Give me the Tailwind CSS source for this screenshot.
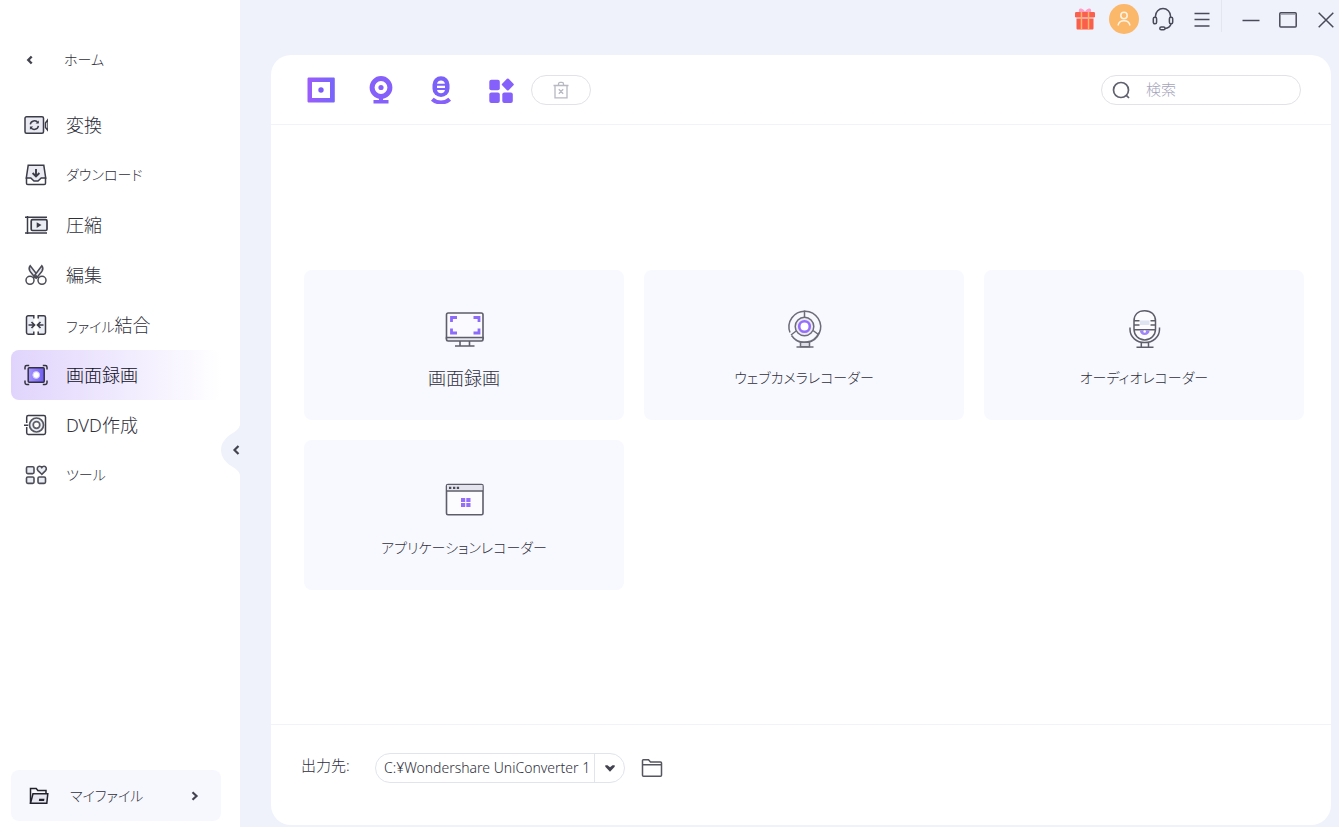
<!DOCTYPE html>
<html lang="ja">
<head>
<meta charset="utf-8">
<meta name="viewport" content="width=device-width, initial-scale=1">
<title>UniConverter</title>
<script src="https://cdn.jsdelivr.net/npm/@tailwindcss/browser@4"></script>
</head>
<body class="bg-[#eff2fb]">
<div class="flex min-h-screen font-['Noto_Sans','Noto_Sans_CJK_JP',sans-serif] text-[#2f303c] font-light">

  <aside class="relative flex w-60 shrink-0 flex-col bg-white pt-9 pr-[19px] pb-1.5 pl-[11px]">
    <button type="button" class="flex h-12 items-center pl-2.5 text-sm [font-feature-settings:'palt']">
      <svg class="mr-[27px] size-4" viewBox="0 0 16 16" fill="none" stroke="#42434e" stroke-width="2.4"><path d="M10.7 4.500 7.300 8l3.400 3.500"/></svg>
      ホーム
    </button>

    <nav class="mt-4 flex flex-col">
      <a href="#" class="flex h-[50px] items-center gap-[18px] rounded-lg pl-[13px] text-lg">
        <svg class="size-6" viewBox="0 0 24 24" fill="none" stroke="#3b3c48" stroke-width="1.5"><rect x="1" y="3.800" width="18.500" height="16.500" rx="1.500" fill="#e9eaf2"/><path d="M21.500 10 24 6.500v11L21.500 14.500z"/><path d="M6.300 11.400a4.200 4.200 0 0 1 7.700-1.600M14.400 12.800a4.200 4.200 0 0 1-7.700 1.600"/><path d="M14.800 7.400v3.200h-3.200zM5.900 16.800v-3.200h3.200z" fill="#3b3c48" stroke="none"/></svg>
        変換
      </a>
      <a href="#" class="flex h-[50px] items-center gap-[18px] rounded-lg pl-[13px] text-sm [font-feature-settings:'palt']">
        <svg class="size-6" viewBox="0 0 24 24" fill="none" stroke="#3b3c48" stroke-width="1.500"><path d="M4.200 2.300h15.600L21.700 15h-4.500l-3.200 3h-4l-3.200-3H2.300z" fill="#e9eaf2"/><path d="M2.500 14.500v5.800c0 .8.500 1.300 1.300 1.300h16.400c.8 0 1.300-.5 1.300-1.300v-5.800"/><path d="M12 6v7.500M8.600 10 12 13.400 15.400 10" stroke-width="1.900"/></svg>
        ダウンロード
      </a>
      <a href="#" class="flex h-[50px] items-center gap-[18px] rounded-lg pl-[13px] text-lg">
        <svg class="size-6" viewBox="0 0 24 24" fill="none" stroke="#3b3c48" stroke-width="1.500"><path d="M3.500 3v18M1 4.200h22M1 20h22"/><rect x="7.200" y="6.700" width="15.800" height="10.800" rx="1.300" fill="#eceef6" stroke-width="1.700"/><path d="m12.700 9.300 4.800 2.800-4.800 2.800z" fill="#3b3c48" stroke="none"/></svg>
        圧縮
      </a>
      <a href="#" class="flex h-[50px] items-center gap-[18px] rounded-lg pl-[13px] text-lg">
        <svg class="size-6" viewBox="0 0 24 24" fill="#e9eaf2" stroke="#4b4c56" stroke-width="1.500"><path d="M6.200 2.800c-1.400 1.800-1.400 3.600-.2 5.400l5.200 6.500 2.200-2.600z"/><path d="M17.800 2.800c1.400 1.800 1.400 3.600.2 5.400l-5.600 7-2.200-2.200z"/><circle cx="6" cy="17.300" r="4" fill="#fff"/><circle cx="18" cy="17.300" r="4" fill="#fff"/><path d="m9 15 3-2.200 3 2.200" fill="none"/></svg>
        編集
      </a>
      <a href="#" class="flex h-[50px] items-center gap-[18px] rounded-lg pl-[13px] text-sm [font-feature-settings:'palt']">
        <svg class="size-6" viewBox="0 0 24 24" fill="none" stroke="#3b3c48" stroke-width="1.500"><path d="M9.800 5.500V2.700H4.200c-1 0-1.700.7-1.700 1.700v15.200c0 1 .7 1.700 1.700 1.700h5.600v-2.800M14.200 5.500V2.700h5.600c1 0 1.700.7 1.700 1.700v15.200c0 1-.7 1.700-1.700 1.700h-5.600v-2.800" fill="#eceef6"/><path d="M4.500 12H10M14 12h5.500M7.500 9l3 3-3 3M16.500 9l-3 3 3 3" stroke-width="1.700"/></svg>
        <span>ファイル<span class="text-lg">結合</span></span>
      </a>
      <a href="#" aria-current="page" class="flex h-[50px] items-center gap-[18px] rounded-lg bg-linear-to-r from-[#e0d4fc] to-white pl-[13px] text-lg text-[#100f1c]">
        <svg class="size-6" viewBox="0 0 24 24" fill="none" stroke="#33323f" stroke-width="1.500"><defs><linearGradient id="rec" x1="0" y1="0" x2="1" y2="0"><stop stop-color="#a695ff"/><stop offset="1" stop-color="#6f5cf5"/></linearGradient></defs><path d="M1 6.500V4.200C1 3.100 1.700 2.500 2.700 2.500h2.500M18.800 2.500h2.500c1 0 1.700.6 1.700 1.700v2.300M1 17.500v2.300c0 1.100.7 1.700 1.700 1.700h2.500M18.800 21.500h2.500c1 0 1.700-.6 1.700-1.700v-2.300"/><rect x="4.200" y="4.800" width="16" height="14.400" rx="1" fill="url(#rec)"/><circle cx="12.200" cy="12" r="3.400" fill="#fff" stroke="#cfc4ff" stroke-width="1"/></svg>
        画面録画
      </a>
      <a href="#" class="flex h-[50px] items-center gap-[18px] rounded-lg pl-[13px] text-lg">
        <svg class="size-6" viewBox="0 0 24 24" fill="none" stroke="#3b3c48" stroke-width="1.500"><path d="M2.700 10V4.200c0-1 .6-1.600 1.600-1.600h15.600c1 0 1.600.6 1.600 1.600v15.600c0 1-.6 1.600-1.600 1.600H4.300c-1 0-1.600-.6-1.600-1.600V14M-.3 12.300h4.500"/><circle cx="12.500" cy="12" r="7" fill="#eceef6" stroke="#55565f" stroke-width="1.700"/><circle cx="12.500" cy="12" r="3.300" fill="#fff" stroke="#5d5e68" stroke-width="1.700"/></svg>
        DVD作成
      </a>
      <a href="#" class="flex h-[50px] items-center gap-[18px] rounded-lg pl-[13px] text-sm [font-feature-settings:'palt']">
        <svg class="size-6" viewBox="0 0 24 24" fill="#eceef6" stroke="#4b4c56" stroke-width="1.600"><rect x="2.500" y="3.800" width="7.500" height="6.800" rx="1.300"/><rect x="2.500" y="14" width="7.500" height="6.400" rx="1.300"/><rect x="14" y="14" width="7.500" height="6.400" rx="1.300"/><path d="M17.800 11.300 14 7.600c-1.500-1.700-.5-4.300 1.600-4.300 1 0 1.700.5 2.200 1.200.5-.7 1.200-1.200 2.200-1.200 2.100 0 3.100 2.600 1.600 4.300z"/></svg>
        ツール
      </a>
    </nav>

    <button type="button" class="mt-auto flex h-[51px] items-center rounded-lg bg-[#f7f8fd] px-[18px] text-sm [font-feature-settings:'palt']">
      <svg class="mr-[21px] size-5" viewBox="0 0 20 20" fill="none" stroke="#20212b" stroke-width="1.500"><path d="M1.500 17.200V2.500h5.700l1.600 2H17v2.500"/><path d="M1.500 17.300 4 7.700h14.800l-1 9.600z" fill="#e5e6ef"/><path d="M10.200 12.700h5.300l-.4 2.200H9.800z" fill="#20212b" stroke="none"/></svg>
      マイファイル
      <svg class="ml-auto size-4" viewBox="0 0 16 16" fill="none" stroke="#42434e" stroke-width="2.200"><path d="m5.500 4.300 4 3.700-4 3.700"/></svg>
    </button>

    <button type="button" aria-label="サイドバーを閉じる" class="absolute top-[425px] right-0">
      <svg class="h-[50px] w-5" viewBox="0 0 20 50"><path d="M20 0v50c-1-4-4-6-8-8.500C5.500 37.500 1 32 1 25S5.500 12.500 12 8.500c4-2.500 7-4.500 8-8.500z" fill="#eff2fb"/><path d="m18.500 21-4 4 4 4" fill="none" stroke="#42434e" stroke-width="2.200"/></svg>
    </button>
  </aside>

  <div class="flex min-w-0 flex-1 flex-col">
    <header class="flex h-[55px] items-start justify-end">
      <button type="button" aria-label="ギフト" class="flex h-[38px] w-[39px] items-center justify-center">
        <svg class="size-6" viewBox="0 0 24 24"><path d="M6.300 5.500C5 3 6.300 1 8.200 1.500c1.500.4 2.600 1.500 3.800 3 1.200-1.500 2.300-2.600 3.800-3 1.900-.5 3.200 1.500 1.900 4z" fill="#ff9dc4"/><rect x="2" y="5" width="20" height="5.500" rx="1.200" fill="#f9604e"/><path d="M3.500 11.500h17v9.700c0 .8-.5 1.300-1.300 1.300H4.800c-.8 0-1.300-.5-1.300-1.300z" fill="#fa5f4b"/><path d="M7.700 5h1.500v17.500H7.700zM14.800 5h1.500v17.500h-1.500z" fill="#ffb36b"/></svg>
      </button>
      <button type="button" aria-label="アカウント" class="flex h-[38px] w-[39px] items-center justify-center">
        <span class="flex size-[30px] items-center justify-center rounded-full bg-[#fbb76a]">
          <svg class="size-[18px]" viewBox="0 0 18 18" fill="none" stroke="#fff3e2" stroke-width="1.500"><circle cx="9" cy="5.500" r="3.200"/><path d="M3 15.500c.6-3.100 3-4.700 6-4.700s5.400 1.600 6 4.700"/></svg>
        </span>
      </button>
      <button type="button" aria-label="サポート" class="flex h-[38px] w-[39px] items-center justify-center">
        <svg class="size-6" viewBox="0 0 24 24" fill="none" stroke="#4a4b59" stroke-width="1.500"><path d="M4.500 10.500V9a7.500 7.500 0 0 1 15 0v1.500M20 17c-.8 2.800-3 4.300-6 4.500"/><rect x="2.300" y="10.300" width="3.300" height="6.500" rx="1.500"/><rect x="18.400" y="10.300" width="3.300" height="6.500" rx="1.500"/><rect x="8.800" y="20" width="5.200" height="2.800" rx="1.400"/></svg>
      </button>
      <button type="button" aria-label="メニュー" class="flex h-10 w-[39px] items-center justify-center">
        <svg class="size-4" viewBox="0 0 16 16" stroke="#4a4b59" stroke-width="1.500"><path d="M.5 1.500h15M.5 7.500h15M.5 14h15"/></svg>
      </button>
      <div class="h-8 w-px bg-[#e3e6f0]"></div>
      <div class="ml-[13px] flex gap-[5px]">
        <button type="button" aria-label="最小化" class="flex h-10 w-8 items-center justify-center">
          <svg class="size-[18px]" viewBox="0 0 18 18" stroke="#4a4b59" stroke-width="1.500"><path d="M.5 9.500h17"/></svg>
        </button>
        <button type="button" aria-label="最大化" class="flex h-10 w-8 items-center justify-center">
          <svg class="size-[18px]" viewBox="0 0 18 18" fill="none" stroke="#4a4b59" stroke-width="1.500"><rect x=".8" y="1.700" width="16.400" height="14.400" rx="1"/><path d="M2 3.200h14" stroke="#8d8e9b" stroke-width="1"/></svg>
        </button>
        <button type="button" aria-label="閉じる" class="flex h-10 w-[30px] items-center justify-end pr-[5px]">
          <svg class="size-4" viewBox="0 0 16 16" stroke="#4a4b59" stroke-width="1.500"><path d="m.7.7 14.600 14.600M15.300.7.7 15.300"/></svg>
        </button>
      </div>
    </header>

    <main class="mr-2 mb-0.5 ml-[31px] flex flex-1 flex-col rounded-[20px] bg-white">
      <div class="flex h-[70px] items-center border-b border-[#f1f3f9] pr-[30px] pl-9">
        <svg class="absolute size-0" aria-hidden="true"><defs><linearGradient id="violet" x1="0" y1="0" x2="1" y2="0"><stop stop-color="#9b5cfb"/><stop offset="1" stop-color="#7766fa"/></linearGradient></defs></svg>
        <div class="flex gap-8">
          <button type="button" aria-label="画面録画"><svg class="size-7" viewBox="0 0 28 28"><path fill="url(#violet)" fill-rule="evenodd" d="M2 1.500h24.500c.8 0 1.300.4 1.300 1.200v22.600c0 .8-.5 1.200-1.300 1.200H2c-.8 0-1.500-.4-1.500-1.200V2.700c0-.8.700-1.200 1.500-1.200zM5 6v16h18V6z"/><circle cx="14" cy="14" r="2.700" fill="#7b5cf8"/></svg></button>
          <button type="button" aria-label="ウェブカメラレコーダー"><svg class="size-7" viewBox="0 0 28 28"><circle cx="14" cy="11.500" r="8.900" fill="none" stroke="#8660fa" stroke-width="5"/><circle cx="14" cy="11.500" r="2.600" fill="#8660fa"/><path d="M12 22h4v2h5.500v3.500h-15V24H12z" fill="#8660fa"/></svg></button>
          <button type="button" aria-label="オーディオレコーダー"><svg class="size-7" viewBox="0 0 28 28"><rect x="5.500" y=".2" width="17" height="20.800" rx="8.500" fill="#7b60fa"/><path d="M10 7.700c.6-2.200 2-3.300 4-3.300s3.400 1.100 4 3.300zM10 9.800h8v2.200h-8zM10 14h8c-.6 2.200-2 3.300-4 3.300S10.600 16.200 10 14z" fill="#fff"/><path d="M5.300 23.200c2.500 2.300 5.400 3.300 8.700 3.300s6.200-1 8.700-3.300" fill="none" stroke="#8660fa" stroke-width="4"/></svg></button>
          <button type="button" aria-label="アプリケーションレコーダー"><svg class="size-7" viewBox="0 0 28 28" fill="#8660fa"><rect x="2.300" y="3.800" width="10.500" height="10.500" rx="2"/><rect x="2.300" y="16.500" width="10.500" height="10.500" rx="2"/><rect x="15.300" y="16.500" width="10.500" height="10.500" rx="2"/><rect x="-4.600" y="-4.600" width="9.200" height="9.200" rx="1.200" transform="translate(20.800 8.500) rotate(45)"/></svg></button>
        </div>
        <button type="button" aria-label="削除" class="ml-4 flex h-[30px] w-[60px] items-center justify-center rounded-full border border-[#e2e2e8]">
          <svg class="size-[18px]" viewBox="0 0 18 18" fill="none" stroke="#b7b8c2" stroke-width="1.300"><path d="M1.500 4.500h15M3 4.500v12.300h12V4.500M6.500 4.500V3c0-1 .6-1.600 1.500-1.600h2c.9 0 1.500.6 1.500 1.600v1.500M6.800 8.200l4.400 4.600M11.200 8.200l-4.400 4.600"/></svg>
        </button>
        <label class="ml-auto flex h-[30px] w-[200px] items-center rounded-full border border-[#e2e2e8] pl-2.5">
          <svg class="mr-4 size-[18px] shrink-0" viewBox="0 0 18 18" fill="none" stroke="#60616f" stroke-width="1.700"><circle cx="9" cy="9" r="7.500"/><path d="m14.300 14.300 2.700 2.700"/></svg>
          <input type="search" placeholder="検索" aria-label="検索" class="w-full min-w-0 bg-transparent text-[15px] outline-none placeholder:text-[#a4a4ba]">
        </label>
      </div>

      <div class="flex flex-1 flex-col justify-center pt-2.5 pr-[27px] pl-[33px]">
        <div class="grid grid-cols-3 gap-5">
          <button type="button" class="flex h-[150px] flex-col items-center rounded-lg bg-[#f8f9fe] pt-[38px] text-lg">
            <svg class="size-10" viewBox="0 0 40 40" fill="none" stroke="#5d5e69" stroke-width="1.600"><path d="M2.500 30.500V6.700C2.500 5.600 3.200 5 4.200 5h33.100c1 0 1.700.6 1.700 1.700v23.800z" fill="#fbfbff"/><path d="M2.500 29.500H39v1.800c0 1-.7 1.700-1.700 1.700H4.200c-1 0-1.700-.7-1.700-1.700z" fill="#e4e4ef"/><path d="M16 33v4.500M25.500 33v4.500M11 38h19.500"/><path d="M7.500 14V9.500H13M29.500 9.500H35V14M7.500 20.500V25H13M29.500 25H35v-4.500" stroke="#8d6bfa" stroke-width="2.800"/></svg>
            <span class="mt-4 leading-7">画面録画</span>
          </button>
          <button type="button" class="flex h-[150px] flex-col items-center rounded-lg bg-[#f8f9fe] pt-[38px] text-sm [font-feature-settings:'palt']">
            <svg class="size-10" viewBox="0 0 40 40" fill="none" stroke="#6c6d78" stroke-width="1.500"><path d="M6 24.500A15.800 15.800 0 1 1 9.500 30M7.500 27.500A15.800 15.800 0 0 0 35 24.500"/><path d="M20.500 2.500v6.500M7 27l5.800-4.500M34.500 26.500l-5.500-4"/><circle cx="20.500" cy="18.500" r="9.300" fill="#eceaf6"/><circle cx="20.500" cy="18.500" r="5.300" fill="#fff" stroke="#956ffa" stroke-width="2.600"/><path d="M16.500 34.300h9v4.500h-9z" fill="#dedee9"/><path d="M12.500 39h17"/></svg>
            <span class="mt-4 leading-7">ウェブカメラレコーダー</span>
          </button>
          <button type="button" class="flex h-[150px] flex-col items-center rounded-lg bg-[#f8f9fe] pt-[38px] text-sm [font-feature-settings:'palt']">
            <svg class="size-10" viewBox="0 0 40 40" fill="none" stroke="#5d5e69" stroke-width="1.500"><path d="M10 13C10 6.800 14 2.700 20.700 2.700S31.500 6.800 31.500 13v8c0 6.200-4.500 11-10.800 11S10 27.200 10 21z" fill="#fcfcff"/><path d="M16 12.500h9.500v4.500H16z" fill="#dfe4f2" stroke="none"/><path d="M10 12.800h5.500M26.500 12.800h5M10 17h5.500M26.500 17h5M10 21.800h21.500"/><path d="M15.800 22.500c.3 3 2 4.400 4.900 4.400s4.600-1.400 4.900-4.400z" fill="#a084fb" stroke="none"/><circle cx="20.700" cy="23.500" r="1.300" fill="#fff" stroke="none"/><path d="M6 19.500v2c0 7.500 6.500 13 14.700 13s14.800-5.500 14.800-13v-2M17.300 34.500V39M24.500 34.500V39M12.500 39.300h17"/></svg>
            <span class="mt-4 leading-7">オーディオレコーダー</span>
          </button>
          <button type="button" class="flex h-[150px] flex-col items-center rounded-lg bg-[#f8f9fe] pt-[38px] text-sm [font-feature-settings:'palt']">
            <svg class="size-10" viewBox="0 0 40 40" fill="none" stroke="#5d5e69" stroke-width="1.600"><rect x="2.500" y="6.500" width="36.500" height="30.200" rx="1.500" fill="#fcfcff"/><path d="M3 7h35.500v5.500H3z" fill="#e4e4ef" stroke="none"/><path d="M2.500 13H39"/><path d="M5 8.700h2.300V11H5zM9 8.700h2.300V11H9zM12.800 8.700h2.300V11h-2.300z" fill="#4b4c57" stroke="none"/><path d="M17 20h4.200v4H17zM22.300 20h4.200v4h-4.200zM17 25h4.200v4H17zM22.300 25h4.200v4h-4.200z" fill="#956ffa" stroke="none"/></svg>
            <span class="mt-4 leading-7">アプリケーションレコーダー</span>
          </button>
        </div>
      </div>

      <footer class="flex h-[101px] items-start border-t border-[#f1f3f9] pt-7 pl-[30px] text-[15px]">
        <label for="dest" class="w-[74px] leading-6">出力先:</label>
        <div class="relative flex h-[30px] w-[250px] rounded-full border border-[#e1e4ed]">
          <select id="dest" class="w-full appearance-none overflow-hidden rounded-full bg-transparent pr-[30px] pl-2 font-['Noto_Sans','Noto_Sans_CJK_JP',sans-serif] text-sm font-light text-[#2f303c] outline-none">
            <option>C:¥Wondershare UniConverter 1</option>
          </select>
          <span class="pointer-events-none absolute inset-y-0 right-0 flex w-[30px] items-center justify-center border-l border-[#e1e4ed]">
            <svg class="size-3" viewBox="0 0 12 12" fill="#42434e"><path d="M1.300 3.200h2.200L6 5.300l2.500-2.100h2.200v1.600L6 9.800 1.300 4.800z"/></svg>
          </span>
        </div>
        <button type="button" aria-label="フォルダーを開く" class="ml-4 flex h-[30px] items-center">
          <svg class="size-[22px]" viewBox="0 0 22 22" fill="none" stroke="#55565f" stroke-width="1.500"><path d="M1.500 7V3.500C1.500 3 1.800 2.700 2.300 2.700h5.200l2 2.300h10c.6 0 1 .4 1 1v12.300c0 .6-.4 1-1 1h-17c-.6 0-1-.4-1-1zM1.500 7.700h19"/></svg>
        </button>
      </footer>
    </main>
  </div>
</div>
</body>
</html>
